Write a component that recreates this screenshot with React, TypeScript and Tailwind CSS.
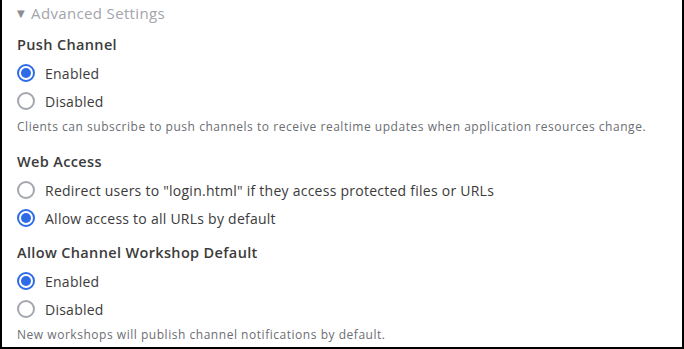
import React, { useState } from 'react';

type Option = { value: string; label: string };

interface RadioGroupProps {
    title: string;
    name: string;
    options: Option[];
    value: string;
    onChange: (v: string) => void;
    help?: string;
}

const Radio: React.FC<{ checked: boolean; label: string; onClick: () => void }> = ({ checked, label, onClick }) => (
    <label className="flex items-center h-7 gap-[10px] cursor-pointer" onClick={onClick}>
        <span
            className={
                checked
                    ? 'w-[18px] h-[18px] rounded-full border-2 border-[#2f6be6] flex items-center justify-center'
                    : 'w-[18px] h-[18px] rounded-full border-2 border-[#a3a7ad]'
            }
        >
            {checked && <span className="w-[10px] h-[10px] rounded-full bg-[#2f6be6]" />}
        </span>
        <span className="text-[14px] tracking-[0.25px] text-[#3b3b3b]">{label}</span>
    </label>
);

const RadioGroup: React.FC<RadioGroupProps> = ({ title, options, value, onChange, help }) => (
    <div className="flex flex-col">
        <div className="text-[14.5px] tracking-[0.35px] font-semibold text-[#3b3b3b] h-[21px] leading-[21px] mb-[4px]">{title}</div>
        {options.map((o) => (
            <Radio key={o.value} checked={value === o.value} label={o.label} onClick={() => onChange(o.value)} />
        ))}
        {help && <p className="text-[12px] tracking-[0.53px] text-[#6b6e73] mt-[4px] mb-[6px] leading-[16px]">{help}</p>}
    </div>
);

export default function App() {
    const [push, setPush] = useState('enabled');
    const [web, setWeb] = useState('all');
    const [workshop, setWorkshop] = useState('enabled');

    return (
        <div
            className="w-[684px] h-[349px] bg-white border-l-2 border-r-2 border-b-2 border-black px-[15px] overflow-hidden"
            style={{ fontFamily: '"Open Sans", "DejaVu Sans", sans-serif' }}
        >
            <div className="flex items-center gap-[6px] h-[26px] text-[15px] tracking-[0.35px] text-[#a2a5aa]">
                <span className="text-[10px] text-[#8a8d92]">▼</span>
                <span>Advanced Settings</span>
            </div>
            <div className="flex flex-col gap-[10px] mt-[8px]">
                <RadioGroup
                    title="Push Channel"
                    name="push"
                    value={push}
                    onChange={setPush}
                    options={[
                        { value: 'enabled', label: 'Enabled' },
                        { value: 'disabled', label: 'Disabled' },
                    ]}
                    help="Clients can subscribe to push channels to receive realtime updates when application resources change."
                />
                <RadioGroup
                    title="Web Access"
                    name="web"
                    value={web}
                    onChange={setWeb}
                    options={[
                        { value: 'redirect', label: 'Redirect users to "login.html" if they access protected files or URLs' },
                        { value: 'all', label: 'Allow access to all URLs by default' },
                    ]}
                />
                <RadioGroup
                    title="Allow Channel Workshop Default"
                    name="workshop"
                    value={workshop}
                    onChange={setWorkshop}
                    options={[
                        { value: 'enabled', label: 'Enabled' },
                        { value: 'disabled', label: 'Disabled' },
                    ]}
                    help="New workshops will publish channel notifications by default."
                />
            </div>
        </div>
    );
}
